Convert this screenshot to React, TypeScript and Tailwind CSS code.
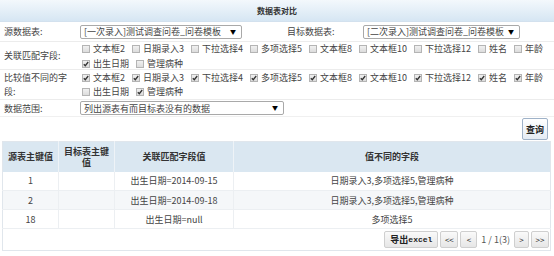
import React from "react";

const font = { fontFamily: '"Noto Sans CJK SC", "Noto Sans", sans-serif' };

const matchLine1 = ["文本框2", "日期录入3", "下拉选择4", "多项选择5", "文本框8", "文本框10", "下拉选择12", "姓名", "年龄"];
const rows = [
  { src: "1", target: "", match: "出生日期=2014-09-15", diff: "日期录入3,多项选择5,管理病种" },
  { src: "2", target: "", match: "出生日期=2014-09-18", diff: "日期录入3,多项选择5,管理病种" },
  { src: "18", target: "", match: "出生日期=null", diff: "多项选择5" },
];

function Box({ checked }: { checked?: boolean }) {
  return (
    <span className="mr-[3px] inline-flex h-[8px] w-[8px] shrink-0 items-center justify-center border border-[#b4b4b4] bg-gradient-to-b from-[#f0f0f0] to-[#dcdcdc]">
      {checked && (
        <svg width="6" height="6" viewBox="0 0 6 6">
          <path d="M0.8 3.2 L2.3 4.7 L5.2 1" fill="none" stroke="#333" strokeWidth="1.3" />
        </svg>
      )}
    </span>
  );
}

function Check({ label, checked }: { label: string; checked?: boolean }) {
  return (
    <span className="mr-[7px] inline-flex items-center">
      <Box checked={checked} />
      <span>{label}</span>
    </span>
  );
}

function Select({ text, w }: { text: string; w: string }) {
  return (
    <div className={`flex h-[14px] items-center justify-between rounded-[2px] border border-[#a9a9a9] bg-white pl-[3px] pr-[5px] ${w}`}>
      <span className="whitespace-nowrap">{text}</span>
      <span className="text-[6px] text-black">▼</span>
    </div>
  );
}

function PageBtn({ children, cls = "" }: { children: React.ReactNode; cls?: string }) {
  return (
    <span className={`flex h-[17px] items-center justify-center rounded-[2px] border border-[#cfcfcf] bg-gradient-to-b from-[#fafafa] to-[#e6e6e6] text-[#222] ${cls}`}>
      {children}
    </span>
  );
}

export default function App() {
  return (
    <div className="h-[256px] w-[554px] overflow-hidden bg-white text-[9px] leading-none text-[#444]" style={font}>
      {/* title */}
      <div className="flex h-[22px] items-center justify-center border-b border-[#d3e1ee] bg-gradient-to-b from-[#f3f8fc] to-[#d6e6f3] text-[8px] font-bold text-[#333]">
        数据表对比
      </div>

      {/* source / target */}
      <div className="flex h-[20px] items-center border-b border-[#ececec]">
        <div className="w-[80px] pl-[4px]">源数据表:</div>
        <Select w="w-[162px]" text="[一次录入]测试调查问卷_问卷模板" />
        <div className="ml-[45px] w-[76px]">目标数据表:</div>
        <Select w="w-[157px]" text="[二次录入]测试调查问卷_问卷模板" />
      </div>

      {/* match fields */}
      <div className="flex h-[28px] items-center border-b border-[#ececec]">
        <div className="w-[80px] pl-[4px]">关联匹配字段:</div>
        <div className="flex flex-col gap-[6px] pl-[2px] pt-[1px]">
          <div className="flex items-center whitespace-nowrap">
            {matchLine1.map((l) => (
              <Check key={l} label={l} />
            ))}
          </div>
          <div className="flex items-center whitespace-nowrap">
            <Check label="出生日期" checked />
            <Check label="管理病种" />
          </div>
        </div>
      </div>

      {/* diff fields */}
      <div className="flex h-[30px] items-center border-b border-[#ececec]">
        <div className="flex w-[80px] flex-col gap-[5px] pl-[4px]">
          <span>比较值不同的字</span>
          <span>段:</span>
        </div>
        <div className="flex flex-col gap-[5px] pl-[2px]">
          <div className="flex items-center whitespace-nowrap">
            {matchLine1.map((l) => (
              <Check key={l} label={l} checked />
            ))}
          </div>
          <div className="flex items-center whitespace-nowrap">
            <Check label="出生日期" />
            <Check label="管理病种" checked />
          </div>
        </div>
      </div>

      {/* range */}
      <div className="flex h-[17px] items-center border-b border-[#f0f0f0]">
        <div className="w-[80px] pl-[4px]">数据范围:</div>
        <Select w="w-[204px]" text="列出源表有而目标表没有的数据" />
      </div>

      <div className="flex h-[24px] items-start justify-end pr-[6px] pt-[1px]">
        <button className="h-[22px] w-[26px] rounded-[2px] border border-[#9fb2c8] bg-gradient-to-b from-[#ffffff] to-[#e4ebf3] text-[9px] font-bold text-[#222]">
          查询
        </button>
      </div>

      {/* result table */}
      <div className="px-[2px]">
        <table className="w-[549px] table-fixed border-collapse border border-[#e0e6ec] text-center text-[9px]">
          <colgroup>
            <col className="w-[56px]" />
            <col className="w-[56px]" />
            <col className="w-[119px]" />
            <col />
          </colgroup>
          <thead>
            <tr className="h-[30px] bg-[#dae7f1] font-bold text-[#333]">
              <th className="border-r border-[#eef3f7] px-[1px]">源表主键值</th>
              <th className="border-r border-[#eef3f7] px-[4px] leading-[11px]">目标表主键值</th>
              <th className="border-r border-[#eef3f7]">关联匹配字段值</th>
              <th>值不同的字段</th>
            </tr>
          </thead>
          <tbody>
            {rows.map((r, i) => (
              <tr key={r.src} className={`h-[19px] border-b border-[#eceff2] ${i === 1 ? "bg-[#f5f7f9]" : "bg-white"}`}>
                <td className="border-r border-[#eceff2]">{r.src}</td>
                <td className="border-r border-[#eceff2]">{r.target}</td>
                <td className="border-r border-[#eceff2]">{r.match}</td>
                <td>{r.diff}</td>
              </tr>
            ))}
            <tr className="h-[22px]">
              <td colSpan={4}>
                <div className="flex items-center justify-end gap-[2px] pr-[1px]">
                  <PageBtn cls="w-[54px] font-bold">
                    <span>导出</span>
                    <span style={{ fontFamily: '"Liberation Mono", monospace' }} className="text-[8px]">excel</span>
                  </PageBtn>
                  <PageBtn cls="w-[18px] text-[8px]">&lt;&lt;</PageBtn>
                  <PageBtn cls="w-[17px] text-[8px]">&lt;</PageBtn>
                  <span className="px-[2px] text-[#555]">1 / 1(3)</span>
                  <PageBtn cls="w-[15px] text-[8px]">&gt;</PageBtn>
                  <PageBtn cls="w-[18px] text-[8px]">&gt;&gt;</PageBtn>
                </div>
              </td>
            </tr>
          </tbody>
        </table>
      </div>
    </div>
  );
}
